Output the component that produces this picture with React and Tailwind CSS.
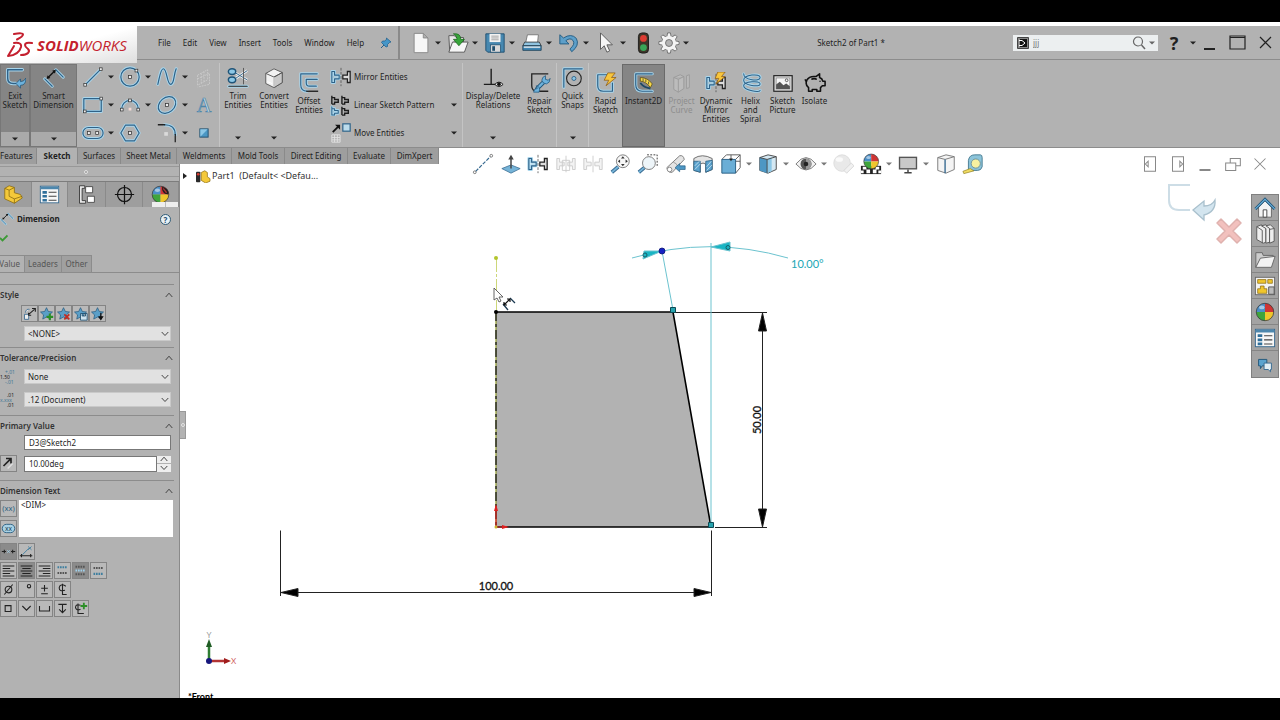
import { useState } from "react";
import clsx from "clsx";

// Line with the pale halo used by the sketch tool icons
function Glow({ d, c = "#2f6288", w = 1.3, halo = "#a9d6ec" }) {
  return (
    <g fill="none" strokeLinecap="round" strokeLinejoin="round">
      <path d={d} stroke={halo} strokeWidth={w + 2} />
      <path d={d} stroke={c} strokeWidth={w} />
    </g>
  );
}

function Dot({ x, y }) {
  return <rect x={x - 1.5} y={y - 1.5} width="3" height="3" fill="#eee" stroke="#333" strokeWidth=".8" />;
}

const STAR = "M9 2l2.200 4.600 5 .6-3.700 3.500 1 5L9 13.200l-4.500 2.500 1-5L1.800 7.200l5-.6z";

const TEETH = [0, 45, 90, 135, 180, 225, 270, 315];

const ball = (
  <g>
    <path d="M12 12V2.500a9.500 9.500 0 0 0-9.500 9.500z" fill="#4a8fc8" />
    <path d="M12 12V2.500a9.500 9.500 0 0 1 9.500 9.500z" fill="#cf3434" />
    <path d="M12 12H2.500a9.500 9.500 0 0 0 9.500 9.500z" fill="#3fa53c" />
    <path d="M12 12h9.500a9.500 9.500 0 0 1-9.500 9.500z" fill="#f0c62c" />
    <circle cx="12" cy="12" r="9.500" fill="none" stroke="#333" strokeWidth=".8" />
    <ellipse cx="8.500" cy="7" rx="3" ry="2" fill="#fff" opacity=".5" />
  </g>
);

const mirror = (
  <g>
    <Glow d="M2 6v12h3v-4h5v-4H5V6z" w={1.2} />
    <path d="M22 6v12h-3v-4h-5v-4h5V6z" fill="#ddd" stroke="#222" strokeWidth="1.400" />
    <path d="M12 2v20" stroke="#555" strokeWidth=".9" strokeDasharray="3 1.500" />
  </g>
);

const ICONS = {
  exitSketch: (
    <g>
      <Glow d="M20 3H4v9q0 6 6 6h3" w={1.6} />
      <path d="M13 18l5-5v3q4 0 6-4 0 8-6 8v3z" fill="#6db2dc" stroke="#1f5478" strokeWidth=".8" />
    </g>
  ),
  smartDim: (
    <g>
      <Glow d="M14 3l8 8M2 13l8 8" />
      <path d="M5 12l8-8" stroke="#111" strokeWidth="1.500" />
      <path d="M4 13l1-4 3 3zM14 3l-1 4-3-3z" fill="#111" />
    </g>
  ),
  line: (
    <g>
      <Glow d="M4 20L20 4" />
      <Dot x={3.5} y={20.5} />
      <Dot x={20.5} y={3.5} />
    </g>
  ),
  circle: (
    <g>
      <Glow d="M22 12a10 10 0 1 1-20 0a10 10 0 1 1 20 0" />
      <Dot x={12} y={12} />
      <Dot x={19} y={5} />
    </g>
  ),
  spline: <Glow d="M2 20C4 12 5 3 8 3c4 0 4 17 8 17 4 0 3-10 6-17" />,
  plane: (
    <g stroke="#cacaca" fill="none" strokeDasharray="2 1">
      <path d="M5 10l11-6v11L5 21zM9 8v11M12 6v11M5 14l13-6v12l-13 3" />
    </g>
  ),
  rect: (
    <g>
      <Glow d="M2 5h19v14H2z" />
      <Dot x={3} y={19} />
      <Dot x={21} y={5} />
    </g>
  ),
  arc: (
    <g>
      <Glow d="M3 16a9 9 0 0 1 18 0" />
      <Dot x={3} y={17} />
      <Dot x={21} y={17} />
      <Dot x={12} y={7} />
      <rect x="10.500" y="15" width="3" height="3" fill="#f4d9d4" />
    </g>
  ),
  ellipse: (
    <g>
      <g transform="rotate(-40 12 12)">
        <Glow d="M22.500 12a10.500 8 0 1 1-21 0a10.500 8 0 1 1 21 0" />
      </g>
      <Dot x={12} y={12} />
    </g>
  ),
  letter: (
    <text x="12" y="20" textAnchor="middle" fontFamily="Liberation Serif, serif" fontSize="22" fill="#c9dfeb" stroke="#4f86a8" strokeWidth=".8">
      A
    </text>
  ),
  slot: (
    <g>
      <Glow d="M7 6h10a6 6 0 0 1 0 12H7A6 6 0 0 1 7 6z" />
      <Dot x={7.5} y={12} />
      <Dot x={16.5} y={12} />
    </g>
  ),
  polygon: (
    <g>
      <Glow d="M7 3.500h10l5 8.500-5 8.500H7L2 12z" />
      <Dot x={12} y={12} />
    </g>
  ),
  fillet: (
    <g>
      <Glow d="M9 3q12 0 12 11" />
      <path d="M2 3h8M21 13v9" stroke="#222" strokeWidth="1.400" />
      <rect x="9" y="11" width="4" height="4" fill="#dadada" />
    </g>
  ),
  point: (
    <g>
      <rect x="7.500" y="7.500" width="9" height="9" fill="#4b97c4" stroke="#1f4e6e" />
      <path d="M8 8h8L8 16z" fill="#8cc7e6" />
    </g>
  ),
  trim: (
    <g>
      <path d="M8.500 13L22 4M8.500 6L22 14" stroke="#eee" strokeWidth="2.800" />
      <path d="M8.500 13L22 4M8.500 6L22 14" stroke="#2f6288" strokeWidth="1" />
      <ellipse cx="5.500" cy="5" rx="4" ry="3.200" fill="#8cc7e6" stroke="#1f5478" strokeWidth="1.600" />
      <ellipse cx="5.500" cy="14" rx="4" ry="3.200" fill="#8cc7e6" stroke="#1f5478" strokeWidth="1.600" />
      <path d="M18 1v18" stroke="#555" />
      <Glow d="M2 21h20" c="#222" />
    </g>
  ),
  convert: (
    <g strokeLinejoin="round">
      <path d="M3 7l9-5 9 4v11l-9 5.500L3 18z" fill="#f1f1f1" stroke="#555" />
      <path d="M12 11l9-5v11l-9 5.500z" fill="#c9c9c9" stroke="#555" />
      <path d="M3 7l9 4 9-5" fill="none" stroke="#555" />
      <path d="M12 11v11M5 16l5 2" stroke="#fff" />
    </g>
  ),
  offset: (
    <g>
      <Glow d="M21 2H3v12q0 7 7 7" w={1.2} />
      <path d="M9 21h13" stroke="#222" strokeWidth="1.500" />
      <Glow d="M21 8H9v4q0 3.500 3.500 3.500H20" />
    </g>
  ),
  mirror,
  pattern: (
    <g fill="none" strokeWidth="1.500" transform="translate(-1 0)">
      <path d="M3 2v9M3 4h3v2h4v3H6v2H3M14 2v9M14 4h3v2h4v3h-4v2h-3" stroke="#1c1c1c" />
      <path d="M14 14v9M14 16h3v2h4v3h-4v2h-3" stroke="#1c1c1c" />
      <Glow d="M3 14v9M3 16h3v2h4v3H6v2H3" w={1.1} />
    </g>
  ),
  move: (
    <g>
      <rect x="14" y="2" width="8" height="8" fill="#bcdcec" stroke="#2f6288" strokeWidth="1.300" />
      <path d="M3 11l7-7" stroke="#111" strokeWidth="2" />
      <path d="M5.500 3H11v5.500z" fill="#111" />
      <path d="M2 14h9v8H2zM5 14v8M8 14v8M2 17h9M2 19.500h9" stroke="#e2e2e2" fill="none" />
    </g>
  ),
  relations: (
    <g>
      <path d="M10 2v17M2 19h14" stroke="#1c1c1c" strokeWidth="1.500" />
      <path d="M14 19q4.500-5 9 0-4.500 4.500-9 0z" fill="#eee" stroke="#111" />
      <circle cx="18.500" cy="18.700" r="2" fill="#111" />
    </g>
  ),
  repair: (
    <g>
      <path d="M21 2H3v13q0 6 6 6h12" fill="none" stroke="#222" strokeWidth="1.400" />
      <path d="M9 18l8-8" stroke="#1f5478" strokeWidth="4.500" strokeLinecap="round" />
      <path d="M9 18l8-8" stroke="#6db2dc" strokeWidth="2.600" strokeLinecap="round" />
      <path d="M15 6l3-2v4l3 1 2-2q0 5-4 6-4 0-5-4zM11 22q2-6-3-7l1 3-3 1-1 3z" fill="#6db2dc" stroke="#1f5478" strokeWidth=".8" />
    </g>
  ),
  snaps: (
    <g>
      <Glow d="M2 22V2h20" />
      <circle cx="13" cy="12.500" r="8" fill="none" stroke="#222" strokeWidth="1.200" />
      <circle cx="13" cy="12.500" r="2.200" fill="#8cc7e6" stroke="#2f6288" />
    </g>
  ),
  rapid: (
    <g>
      <Glow d="M15 3H3v12q0 6 6 6h10V12" />
      <path d="M14 1h8l-4 5h5L12 15l3-6h-5z" fill="#f8c63d" stroke="#8f5a10" strokeWidth=".8" />
    </g>
  ),
  instant: (
    <g>
      <Glow d="M21 2H3v12q0 7 7 7h11" />
      <path d="M8 6q8 0 13 7l-2 4Q14 10 8 10z" fill="#f6d94a" stroke="#5c4a10" strokeWidth=".8" />
      <path d="M11 7v3M14 8v3M17 10.500v3" stroke="#333" strokeWidth=".8" />
      <path d="M8 12q4 5 11 6" fill="none" stroke="#1c4766" strokeWidth="2" />
    </g>
  ),
  project: (
    <g fill="#bcbcbc" stroke="#999">
      <path d="M3 6l7-3 4 2v13l-6 4-5-3zM8 8v14M3 6l5 2 6-3M17 4l3-1v14l-3 1z" />
    </g>
  ),
  dynamic: (
    <g>
      {mirror}
      <path d="M14 0h8l-4 5h4l-10 8 3-6h-4z" fill="#f8c63d" stroke="#8f5a10" strokeWidth=".8" />
    </g>
  ),
  helix: (
    <g>
      <Glow d="M4 2c0 7 18 9 18 4S4 3 4 9s18 8 18 4-18-3-18 2 18 8 18 5" w={1.1} />
    </g>
  ),
  picture: (
    <g>
      <rect x="2" y="4" width="20" height="17" fill="#ddd" stroke="#222" strokeWidth="1.300" />
      <rect x="4.500" y="6.500" width="15" height="12" fill="#f6f6f6" stroke="#777" strokeWidth=".7" />
      <path d="M4.500 18.500v-5l4-3 4 4 3-2 4 3v3z" fill="#555" />
      <circle cx="16" cy="9" r="1.500" fill="none" stroke="#333" strokeWidth=".8" />
    </g>
  ),
  pig: (
    <g fill="none" stroke="#111" strokeWidth="1.700" strokeLinejoin="round">
      <path d="M3 9Q6 4 13 5l4-3v4q3 1 3.500 4H23v5h-3l-2 2v4h-4v-2H9v2H5v-4q-4-3-2-8z" />
      <path d="M8 8q3-1.500 6 0M1 8l2 3M17.500 9.500v1" />
    </g>
  ),

  // title bar
  newDoc: <path d="M4.500 1.500h10l5 5v16h-15zM14.500 1.500v5h5" fill="#f7f7f7" stroke="#888" />,
  open: (
    <g>
      <path d="M2 4h6l2 2h8v5H7L3 22z" fill="#e9e9e9" stroke="#555" />
      <path d="M6 11h17l-4 11H2z" fill="#f6f6f6" stroke="#555" />
      <path d="M7 2q8-1 8 6h4l-6 7-6-7h4q0-4-4-6z" fill="#37a53a" stroke="#17641a" strokeWidth=".8" />
    </g>
  ),
  save: (
    <g>
      <path d="M2 2h20v20H4l-2-2z" fill="#4788b0" stroke="#1f4e6e" />
      <rect x="6" y="2" width="12" height="9" fill="#f2f2f2" />
      <path d="M8 4.500h8M8 6.500h8M8 8.500h8" stroke="#888" strokeWidth=".8" />
      <rect x="7" y="14" width="11" height="8" fill="#d9d9d9" stroke="#1f4e6e" strokeWidth=".8" />
      <rect x="9" y="15.500" width="3" height="5" fill="#1f4e6e" />
    </g>
  ),
  print: (
    <g strokeLinejoin="round">
      <path d="M7 3h12l-1 9H5z" fill="#fff" stroke="#777" />
      <path d="M4 11h16l2 4H2z" fill="#8fc3e0" stroke="#333" strokeWidth=".9" />
      <path d="M2 15h20v5H2z" fill="#3f86b3" stroke="#1d3f55" strokeWidth=".9" />
      <path d="M3 16.500h18" stroke="#f2f2f2" strokeWidth="1.400" />
    </g>
  ),
  undo: (
    <path d="M2 3v10h10L8.500 9.500q5-4 8 0 2.500 4-3.500 9l2 3q9-7 5-14.500Q14.500 1 6 6.500z" fill="#5d9fc9" stroke="#215a80" />
  ),
  cursor: <path d="M6 1v18l4-4 3 7 3-1.500-3-6.500h6z" fill="#f6f6f6" stroke="#555" />,
  traffic: (
    <g>
      <rect x="7" y="1" width="11" height="22" rx="4" fill="#3d3528" stroke="#1b1b1b" />
      <circle cx="12.500" cy="7" r="3.700" fill="#dc3b32" />
      <circle cx="12.500" cy="17" r="3.700" fill="#39a557" />
    </g>
  ),
  gear: (
    <g fill="#f4f4f4" stroke="#666" strokeWidth=".9">
      {TEETH.map((a) => (
        <path key={a} d="M9.500 6l1-5h3l1 5z" transform={`rotate(${a} 12 12)`} />
      ))}
      <circle cx="12" cy="12" r="7.600" stroke="none" />
      <circle cx="12" cy="12" r="3.800" fill="#b2b2b2" />
    </g>
  ),
  pin: (
    <g>
      <path d="M2 22l8-8" stroke="#205f8c" strokeWidth="2" />
      <path d="M13 2l9 8-3 1-4 4v4l-3 1-9-9 2-3h4l4-3z" fill="#4596c8" stroke="#205f8c" strokeWidth="1.500" />
    </g>
  ),

  // heads-up toolbar
  centerline: (
    <g>
      <path d="M4 20L20 4" stroke="#35688f" strokeWidth="1.300" strokeDasharray="4 1.500" />
      <circle cx="3" cy="21" r="1.500" fill="#fff" stroke="#555" strokeWidth=".8" />
      <circle cx="21" cy="3" r="1.500" fill="#fff" stroke="#555" strokeWidth=".8" />
    </g>
  ),
  normal: (
    <g>
      <path d="M2 17l10-4 10 4-10 5z" fill="#76b4d8" stroke="#35688f" strokeWidth=".8" />
      <path d="M12 17V5" stroke="#444" strokeWidth="1.600" />
      <path d="M9 7l3-5 3 5z" fill="#444" />
    </g>
  ),
  mirrorOff: (
    <g fill="#f3f3f3" stroke="#ccc">
      <path d="M2 6v12h3v-4h5v-4H5V6zM22 6v12h-3v-4h-5v-4h5V6zM12 3v18" />
      <path d="M8 8h8v11H8z" fill="none" />
    </g>
  ),
  mirrorOff2: <path d="M2 6v12h3v-4h5v-4H5V6zM22 6v12h-3v-4h-5v-4h5V6zM12 3v18" fill="#f3f3f3" stroke="#ccc" />,
  zoomFit: (
    <g>
      <path d="M2 21l7-6" stroke="#35688f" strokeWidth="4" />
      <path d="M2 21l7-6" stroke="#76b4d8" strokeWidth="2" />
      <circle cx="14" cy="9" r="7" fill="#f7f7f7" stroke="#777" />
      <path d="M14 3.500l2 2.500h-4zM14 14.500l2-2.500h-4zM8.500 9L11 7v4zM19.500 9L17 7v4z" fill="#333" />
    </g>
  ),
  zoomArea: (
    <g>
      <path d="M2 21l6-5" stroke="#35688f" strokeWidth="4" />
      <path d="M2 21l6-5" stroke="#76b4d8" strokeWidth="2" />
      <circle cx="13" cy="11" r="7" fill="#eef5f9" stroke="#777" />
      <path d="M11 2h11v12" fill="none" stroke="#333" strokeDasharray="2 1.500" />
    </g>
  ),
  prevView: (
    <g>
      <path d="M2 16L16 3q4-1 5 4L8 21q-5 1-6-5z" fill="#e4e4e4" stroke="#777" />
      <path d="M9 10q4 1 5 5" fill="none" stroke="#999" />
      <circle cx="5" cy="18" r="2.500" fill="#fff" stroke="#888" />
      <path d="M11 16l5-4.500V14h6v4h-6v2.500z" fill="#4d97c4" stroke="#235a80" strokeWidth=".7" />
    </g>
  ),
  section: (
    <g>
      <path d="M2 6q9-6 20 0v12l-7 3v-9q-3-2-6 0v9l-7-2z" fill="#e4e4e4" stroke="#666" />
      <path d="M2 9h7v12l-7-2zM15 9l7-1v10l-7 3z" fill="#5ba3ce" stroke="#235a80" strokeWidth=".8" />
      <path d="M3 14l5-5M3 18l6-6M16 15l5-6M16 19l6-6" stroke="#d9ecf6" strokeWidth=".8" />
    </g>
  ),
  viewOrient: (
    <g>
      <path d="M7 2h15v14M7 2L2 7M22 2l-5 5M22 16l-5 6M12 2v6M22 9h-5" fill="none" stroke="#555" />
      <path d="M2 7h15v15H2z" fill="#6aaed6" stroke="#235a80" />
      <path d="M10 6l2 3 2-3z" fill="#222" />
    </g>
  ),
  displayStyle: (
    <g strokeLinejoin="round">
      <path d="M3 5l9-3 9 2v14l-9 4-9-3z" fill="#d4e8f3" stroke="#444" />
      <path d="M3 5l8 2v15l-8-3z" fill="#4d97c4" />
      <path d="M11 7l5-2v15l-5 2z" fill="#8cc7e6" />
      <path d="M3 5l8 2 10-3M11 7v15" fill="none" stroke="#444" />
    </g>
  ),
  eye: (
    <g>
      <path d="M1 12q11-14 22 0-11 13-22 0z" fill="#f2f2f2" stroke="#777" />
      <circle cx="12" cy="12" r="6" fill="#555" />
      <path d="M12 6a6 6 0 0 1 0 12z" fill="#999" />
      <circle cx="12" cy="12" r="2.500" fill="#222" />
    </g>
  ),
  appearOff: (
    <g opacity=".6">
      <circle cx="11" cy="11" r="9" fill="#dcdcdc" stroke="#c6c6c6" />
      <ellipse cx="8" cy="7" rx="4" ry="2.500" fill="#f8f8f8" />
      <path d="M13 19l8-8 3 3-8 8z" fill="#e8e8e8" stroke="#bbb" />
    </g>
  ),
  scene: (
    <g>
      <path d="M1 14h22v9H1z" fill="#222" />
      <path d="M3 15h4v3H3zM17 15h4v3h-4zM7 18h4v4H7zM14 18h4v4h-4zM1 19h3v3H1zM20 19h3v3h-3z" fill="#fff" />
      <g transform="translate(2 -1) scale(.85)">{ball}</g>
    </g>
  ),
  monitor: (
    <g>
      <rect x="2" y="4" width="20" height="14" fill="#555" />
      <rect x="3.500" y="5.500" width="17" height="11" fill="#c9c9c9" />
      <path d="M12 18v3M8 21.500h8" stroke="#444" strokeWidth="1.600" />
    </g>
  ),
  box: (
    <g strokeLinejoin="round">
      <path d="M3 5l9-3 9 2v14l-9 4-9-3z" fill="#f4f4f4" stroke="#777" />
      <path d="M3 5l8 2 10-3" fill="none" stroke="#777" />
      <path d="M11 7v15" stroke="#35688f" strokeWidth="1.500" />
    </g>
  ),
  tape: (
    <g>
      <path d="M7 8q1-6 7-6h6q2 0 2 3v10q-1 4-5 4H7z" fill="#8cc4da" stroke="#45798f" />
      <path d="M9 17l-8 3 1 2.500 11-3z" fill="#f1dc62" stroke="#8a7a20" strokeWidth=".7" />
      <circle cx="15" cy="11.500" r="5" fill="#f7f1a0" stroke="#6b8f9a" />
    </g>
  ),

  // task pane
  home: (
    <g>
      <path d="M5 11v11h14V11l-7-7z" fill="#f4f4f4" stroke="#666" />
      <path d="M10 14h4v8h-4z" fill="#fff" stroke="#444" />
      <path d="M1.500 13L12 2.500 22.500 13" fill="none" stroke="#1f5478" strokeWidth="3" />
      <path d="M1.500 13L12 2.500 22.500 13" fill="none" stroke="#6db2dc" strokeWidth="1.200" />
    </g>
  ),
  books: (
    <g fill="#eee" stroke="#555" strokeLinejoin="round">
      <path d="M3 4l5-2 5 4v15l-3 1-7-4z" />
      <path d="M8 3l5-1 4 4v15l-4 1V6z" />
      <path d="M13 3l5-1 4 4v14l-5 2V6z" />
      <path d="M3 4l6 4v14M17 7l5-1" fill="none" />
    </g>
  ),
  folder: (
    <g>
      <path d="M2 4h7l1 3h11v4H7L2 20z" fill="#ccc" stroke="#666" />
      <path d="M7 10l16-2-4 12H2z" fill="#f2f2f2" stroke="#666" />
    </g>
  ),
  palette: (
    <g>
      <rect x="1.500" y="2.500" width="21" height="19" fill="#f3f3f3" stroke="#666" />
      <path d="M4 5h9v4H4zM15 5h5v4h-5zM7 12h4v3h3v5H4v-5h3z" fill="#f0c62c" stroke="#8a6a10" strokeWidth=".8" />
      <path d="M16 13h6v8h-6z" fill="#bbb" stroke="#555" />
    </g>
  ),
  ball,
  appearance: (
    <g>
      {ball}
      <path d="M14 3q8 2 7 9l-4-1q-4-3-3-8z" fill="#1f1f1f" />
      <path d="M15 5l4 5" stroke="#a33" strokeWidth="1.500" />
    </g>
  ),
  props: (
    <g>
      <rect x="1.500" y="2.500" width="21" height="19" fill="#f7f7f7" stroke="#35688f" />
      <path d="M2 3h20v3H2z" fill="#4d87ad" />
      <path d="M4 8h5v3H4zM4 12.500h5v3H4zM4 17h5v3H4z" fill="#2f6f9a" />
      <path d="M11 9.500h9M11 14h9M11 18.500h9" stroke="#444" strokeWidth="1.200" />
    </g>
  ),
  chat: (
    <g>
      <path d="M5 7h9v7H9l-2 3v-3H5z" fill="#5ba3ce" stroke="#1f5478" />
      <path d="M11 11h8v7h-1v2.500L15.500 18H11z" fill="#e3eef4" stroke="#35688f" />
    </g>
  ),

  // property manager
  part: (
    <g stroke="#8a6a10" strokeWidth=".9" strokeLinejoin="round">
      <path d="M2 5l5-3 6 2v6l7 2 2 4-9 6L2 17z" fill="#f4c93a" />
      <path d="M2 5l5 2 6-3M7 7v7l6 3 9-3M13 17v5" fill="none" />
    </g>
  ),
  tree: (
    <g>
      <path d="M4 2h6v3H7v14h4v3H4z" fill="#e8e8e8" stroke="#333" />
      <path d="M11 3h8v7h-8zM13 14h8v7h-8z" fill="#fff" stroke="#444" />
    </g>
  ),
  target: (
    <g fill="none" stroke="#111" strokeWidth="1.400">
      <circle cx="12" cy="12" r="8" />
      <path d="M12 1v22M1 12h22" />
    </g>
  ),
};

function Icon({ name, className = "size-6" }) {
  return (
    <svg viewBox="0 0 24 24" className={clsx("shrink-0", className)} aria-hidden="true">
      {ICONS[name]}
    </svg>
  );
}

function Caret({ className = "fill-[#222]" }) {
  return (
    <svg viewBox="0 0 6 4" className={clsx("h-1 w-[6px] shrink-0", className)} aria-hidden="true">
      <path d="M0 .5h6L3 3.500z" />
    </svg>
  );
}

function Chevron({ up, className }) {
  return (
    <svg viewBox="0 0 8 6" className={clsx("h-[6px] w-2 shrink-0", className)} aria-hidden="true">
      <path d={up ? "M.7 5L4 1.200 7.300 5" : "M.7 1L4 4.500 7.300 1"} fill="none" stroke="#444" strokeWidth="1" />
    </svg>
  );
}

const MENUS = ["File", "Edit", "View", "Insert", "Tools", "Window", "Help"];
const QUICK = [
  ["newDoc", "New"],
  ["open", "Open"],
  ["save", "Save"],
  ["print", "Print"],
  ["undo", "Undo"],
  ["cursor", "Select"],
];

function TitleBar() {
  return (
    <header className="flex h-[34px] items-center border-b border-[#8c8c8c] bg-[#b2b2b2]">
      <div className="z-10 flex h-[37px] w-[137px] shrink-0 items-center self-start bg-gradient-to-br from-white via-white to-[#dedede] pl-[6px]">
        <svg viewBox="0 0 28 26" className="h-[26px] w-7" aria-hidden="true">
          <g fill="none" stroke="#c41f2e" strokeWidth="2" strokeLinecap="round" strokeLinejoin="round">
            <path d="M8 2q9-1.500 9 .5 0 2-6 5" />
            <path d="M8 11q8-1 7 4-2 8-13 9l6-10" />
            <path d="M26 11q-7-1-7 2 0 2 3 4 2 2 0 4-2 2-7 2" />
          </g>
        </svg>
        <span className="pl-[3px] font-['Open_Sans',sans-serif] text-[15px] leading-4 text-[#c41f2e] italic">
          <b>SOLID</b>WORKS
        </span>
      </div>
      <nav className="flex gap-3 pl-[21px]">
        {MENUS.map((m) => (
          <button key={m} type="button">{m}</button>
        ))}
      </nav>
      <button type="button" aria-label="Pin menu" className="ml-4">
        <Icon name="pin" className="size-3" />
      </button>
      <div className="ml-[6px] h-full w-[2px] bg-[#8a8a8a]" />
      <div className="flex items-center pl-2">
        {QUICK.map(([icon, label]) => (
          <div key={icon} className="flex w-[37px] items-center">
            <button type="button" aria-label={label} className="flex w-[26px] justify-center">
              <Icon name={icon} className="size-[22px]" />
            </button>
            <button type="button" aria-label={`${label} options`} className="pl-px"><Caret /></button>
          </div>
        ))}
        <button type="button" aria-label="Rebuild" className="flex w-[26px] justify-center"><Icon name="traffic" className="size-[22px]" /></button>
        <button type="button" aria-label="Options" className="flex w-[26px] justify-center"><Icon name="gear" className="size-[22px]" /></button>
        <button type="button" aria-label="More options" className="pl-px"><Caret /></button>
      </div>
      <h1 className="flex-1 text-center">Sketch2 of Part1 *</h1>
      <label className="flex h-4 w-[145px] items-center bg-[#eceff0] pl-1">
        <svg viewBox="0 0 12 12" className="size-3 shrink-0" aria-hidden="true">
          <path d="M.5.5h11v11H.5z" fill="#888" stroke="#444" />
          <path d="M3 2h7v8H3z" fill="#111" />
          <path d="M2 3.500h3L8 6 5 8.500H2" fill="none" stroke="#fff" />
        </svg>
        <input aria-label="Search" defaultValue="jjj" className="w-full min-w-0 bg-transparent px-1 text-[#777] outline-none" />
        <svg viewBox="0 0 14 14" className="size-[14px] shrink-0" aria-hidden="true">
          <circle cx="6" cy="5.500" r="4.500" fill="none" stroke="#666" strokeWidth="1.200" />
          <path d="M9.500 9l3.500 4" stroke="#666" strokeWidth="1.500" />
        </svg>
        <span className="px-[3px]"><Caret className="fill-[#666]" /></span>
      </label>
      <button type="button" aria-label="Help" className="w-8 text-center text-[18px] leading-5 font-bold">?</button>
      <Caret />
      <div className="flex w-[84px] items-center">
        {[
          ["Minimize", "M6 18h11"],
          ["Maximize", "M4 5h15v13H4zM4 6.500h15"],
          ["Close", "M6 6l11 11M17 6L6 17"],
        ].map(([label, d], i) => (
          <button key={label} type="button" aria-label={label} className="flex w-7 justify-center">
            <svg viewBox="0 0 24 24" className="size-6"><path d={d} fill="none" stroke="#222" strokeWidth={i ? 1.2 : 2} /></svg>
          </button>
        ))}
      </div>
    </header>
  );
}

const GRID = [
  ["line", true], ["circle", true], ["spline", true], ["plane"],
  ["rect", true], ["arc", true], ["ellipse", true], ["letter"],
  ["slot", true], ["polygon"], ["fillet", true], ["point"],
];

function RibbonButton({ icon, label, w, low, arrow, pressed, disabled }) {
  return (
    <button
      type="button"
      disabled={disabled}
      className={clsx(
        "flex h-[83px] shrink-0 flex-col items-center text-center",
        w,
        low ? "pt-2" : "pt-[3px]",
        pressed && "bg-[#858585] outline-1 -outline-offset-1 outline-[#6a6a6a]",
        disabled && "text-[#8d8d8d]",
      )}
    >
      <Icon name={icon} className="size-[22px]" />
      <span className="pt-[2px] leading-[9px] whitespace-pre-line">{label}</span>
      {arrow && <span className="mt-auto pb-[7px]"><Caret /></span>}
    </button>
  );
}

function StickyTool({ icon, label, w }) {
  return (
    <button type="button" className={clsx("flex h-[83px] shrink-0 flex-col border border-[#777] bg-[#858585] text-center", w)}>
      <span className="flex flex-1 flex-col items-center pt-[2px]">
        <Icon name={icon} className="size-[22px]" />
        <span className="pt-[2px] leading-[9px] whitespace-pre-line">{label}</span>
      </span>
      <span className="flex h-[14px] w-full items-center justify-center bg-[#aaaaaa]"><Caret /></span>
    </button>
  );
}

function Rule() {
  return <div className="w-px shrink-0 self-stretch bg-[#c4c4c4]" />;
}

function Ribbon() {
  return (
    <div className="flex h-[88px] items-center overflow-hidden border-b border-[#8c8c8c] bg-[#b2b2b2] pt-[3px]">
      <StickyTool icon="exitSketch" label={"Exit\nSketch"} w="w-[30px]" />
      <StickyTool icon="smartDim" label={"Smart\nDimension"} w="w-[47px]" />
      <div className="grid h-[83px] shrink-0 grid-cols-[37px_37px_37px_28px] content-between pl-[3px]">
        {GRID.map(([icon, arrow]) => (
          <div key={icon} className="flex h-[27px] items-center">
            <button type="button" aria-label={icon} className="flex w-[26px] justify-center"><Icon name={icon} className="size-[22px]" /></button>
            {arrow && <span className="pl-[2px]"><Caret /></span>}
          </div>
        ))}
      </div>
      <Rule />
      <RibbonButton icon="trim" label={"Trim\nEntities"} w="w-9" arrow />
      <RibbonButton icon="convert" label={"Convert\nEntities"} w="w-9" arrow />
      <RibbonButton icon="offset" label={"Offset\nEntities"} w="w-[34px]" low />
      <div className="flex h-[83px] w-[136px] shrink-0 flex-col justify-between">
        {[
          ["mirror", "Mirror Entities", false],
          ["pattern", "Linear Sketch Pattern", true],
          ["move", "Move Entities", true],
        ].map(([icon, label, arrow]) => (
          <button key={icon} type="button" className="flex h-[27px] items-center gap-[2px] pr-[5px] pl-1 text-left">
            <Icon name={icon} className="size-[22px]" />
            <span className="flex-1 whitespace-nowrap">{label}</span>
            {arrow && <Caret />}
          </button>
        ))}
      </div>
      <Rule />
      <RibbonButton icon="relations" label={"Display/Delete\nRelations"} w="w-[60px]" arrow />
      <RibbonButton icon="repair" label={"Repair\nSketch"} w="w-[33px]" low />
      <Rule />
      <RibbonButton icon="snaps" label={"Quick\nSnaps"} w="w-[31px]" arrow />
      <Rule />
      <RibbonButton icon="rapid" label={"Rapid\nSketch"} w="w-[33px]" low />
      <RibbonButton icon="instant" label="Instant2D" w="w-[43px]" low pressed />
      <RibbonButton icon="project" label={"Project\nCurve"} w="w-[33px]" low disabled />
      <RibbonButton icon="dynamic" label={"Dynamic\nMirror\nEntities"} w="w-9" low />
      <RibbonButton icon="helix" label={"Helix\nand\nSpiral"} w="w-[33px]" low />
      <RibbonButton icon="picture" label={"Sketch\nPicture"} w="w-[31px]" low />
      <RibbonButton icon="pig" label="Isolate" w="w-[33px]" low />
    </div>
  );
}

const TABS = [
  ["Features", "w-[37px]"],
  ["Sketch", "w-[41px]"],
  ["Surfaces", "w-[43px]"],
  ["Sheet Metal", "w-[56px]"],
  ["Weldments", "w-[55px]"],
  ["Mold Tools", "w-[53px]"],
  ["Direct Editing", "w-[63px]"],
  ["Evaluate", "w-[43px]"],
  ["DimXpert", "w-[48px]"],
];

const HUD = [
  ["centerline"], ["normal"], ["mirror"], ["mirrorOff"], ["mirrorOff2"], ["zoomFit"], ["zoomArea"],
  ["prevView"], ["section"], ["viewOrient", true], ["displayStyle", true], ["eye", true], ["appearOff"],
  ["scene", true], ["monitor", true], ["box"], ["tape"],
];

const DOC_BUTTONS = [
  ["Collapse left", "M6 4h12v16H6zM10 9v6l-3-3z"],
  ["Collapse right", "M6 4h12v16H6zM14 9v6l3-3z"],
  ["Minimize document", "M6 19h12M6 18h12"],
  ["Restore document", "M4 11h11v8H4zM9 11V6h11v8h-5"],
  ["Close document", "M6 6l12 12M18 6L6 18"],
];

function TabRow() {
  const [tab, setTab] = useState("Sketch");
  return (
    <div className="relative z-10 flex h-4 bg-white">
      <nav className="flex h-4 shrink-0 bg-[#9e9e9e]">
        {TABS.map(([name, w]) => (
          <button
            key={name}
            type="button"
            onClick={() => setTab(name)}
            className={clsx(
              "border-r border-[#8a8a8a] text-center whitespace-nowrap",
              w,
              name === "Features" && "pr-1",
              tab === name ? "bg-[#b2b2b2] font-bold" : "bg-[#9e9e9e]",
            )}
          >
            {name}
          </button>
        ))}
      </nav>
      <div className="ml-[31px] flex h-8 w-[516px] shrink-0 items-center justify-between">
        {HUD.map(([icon, arrow]) => (
          <div key={icon} className="flex items-center">
            <button type="button" aria-label={icon} className="flex w-[26px] justify-center"><Icon name={icon} className="size-[22px]" /></button>
            {arrow && <span className="flex w-[10px] justify-center"><Caret className="fill-[#777]" /></span>}
          </div>
        ))}
      </div>
      <div className="mr-[7px] ml-auto flex h-8 w-[136px] items-center justify-between">
        {DOC_BUTTONS.map(([label, d]) => (
          <button key={label} type="button" aria-label={label} className="flex w-[26px] justify-center">
            <svg viewBox="0 0 24 24" className="size-[22px]"><path d={d} fill="none" stroke="#888" strokeWidth="1.100" /></svg>
          </button>
        ))}
      </div>
    </div>
  );
}

function Section({ title, children, className }) {
  return (
    <section className={className}>
      <div className="mr-[5px] border-t border-[#8c8c8c]" />
      <div className="flex h-[19px] items-center justify-between pr-[6px]">
        <h3 className="font-semibold text-[#333]">{title}</h3>
        <button type="button" aria-label={`Collapse ${title}`}><Chevron up /></button>
      </div>
      {children}
    </section>
  );
}

function Select({ label, value, icon }) {
  return (
    <label className="flex h-[15px] items-center pr-2">
      <span className="flex w-6 shrink-0 items-center">{icon}</span>
      <span className="relative flex flex-1">
        <select aria-label={label} className="h-[15px] w-full appearance-none border border-[#c9c9c9] bg-[#e1e1e1] px-[3px] leading-[13px] outline-none">
          <option>{value}</option>
        </select>
        <Chevron className="absolute top-[5px] right-[2px]" />
      </span>
    </label>
  );
}

function ToolButton({ label, on, children }) {
  return (
    <button
      type="button"
      aria-label={label}
      aria-pressed={!!on}
      className={clsx("size-[17px] shrink-0 border border-[#848484]", on ? "bg-[#8b8b8b]" : "bg-[#b9b9b9]")}
    >
      <svg viewBox="0 0 18 18" className="size-full">{children}</svg>
    </button>
  );
}

const stroke = { fill: "none", stroke: "#222", strokeWidth: 1.3 };

const tiny = (x, y, text, fill = "#222") => (
  <text x={x} y={y} fontSize="5" fontFamily="Noto Sans, sans-serif" fill={fill}>{text}</text>
);

const dashes = (y, fill) => <path d={`M3 ${y}h12`} stroke={fill} strokeWidth="2.500" strokeDasharray="2 1" />;

function PropertyPanel() {
  return (
    <aside className="flex w-[180px] shrink-0 flex-col overflow-hidden border-r border-[#8a8a8a] bg-[#b2b2b2]">
      <div className="mt-[2px] mb-1 flex h-[11px] shrink-0 items-center justify-center border-y border-[#989898]">
        <span className="mr-2 size-1 rounded-full border border-[#e4e4e4] bg-[#999]" />
      </div>
      <div className="flex h-[26px] shrink-0 border-t border-[#7d7d7d] bg-[#9e9e9e]">
        {[
          ["part", "w-8"], ["props", "w-9"], ["tree", "w-[38px]"], ["target", "w-[37px]"], ["appearance", "w-9"],
        ].map(([icon, w]) => (
          <button
            key={icon}
            type="button"
            aria-label={icon}
            className={clsx(
              "relative flex items-center justify-center border-r border-[#8a8a8a]",
              w,
              icon === "part" && "pr-1",
              icon === "props" && "bg-[#b2b2b2]",
            )}
          >
            <Icon name={icon} className="size-[21px]" />
            {icon === "appearance" && (
              <span className="absolute right-0 bottom-0 flex h-[5px] w-[26px] gap-px bg-[#bbb]">
                <i className="flex-1 bg-[#eee]" />
                <i className="flex-1 bg-[#eee]" />
              </span>
            )}
          </button>
        ))}
      </div>

      <div className="flex h-6 shrink-0 items-center pr-2">
        <Icon name="smartDim" className="size-[14px]" />
        <h2 className="flex-1 pl-[3px] font-bold text-[#222]">Dimension</h2>
        <button type="button" aria-label="Help" className="size-[11px] rounded-full border border-[#2f5a75] bg-[#e8f1f5] text-center leading-[9px] font-bold text-[#1f4e6e]">
          ?
        </button>
      </div>
      <button type="button" aria-label="OK" className="flex h-[14px] shrink-0 items-center">
        <svg viewBox="0 0 8 8" className="size-2"><path d="M0 4l2.500 2.500L7.500 1.500" fill="none" stroke="#3b9a35" strokeWidth="1.800" /></svg>
      </button>
      <div className="mt-[10px] mb-[11px] flex h-[18px] shrink-0 border-b border-[#8c8c8c] text-[#555]">
        <button type="button" className="flex w-6 items-center justify-end border-t border-[#8c8c8c] pr-1">Value</button>
        <button type="button" className="w-[38px] border border-b-0 border-[#8c8c8c] bg-[#a0a0a0]">Leaders</button>
        <button type="button" className="w-[30px] border border-b-0 border-l-0 border-[#8c8c8c] bg-[#a0a0a0]">Other</button>
      </div>

      <Section title="Style" className="pb-[6px]">
        <div className="mb-[3px] flex h-[19px] items-center pl-[21px]">
          <ToolButton label="Apply defaults">
            <path d="M3 16v-6h5v6zM4 8q1-5 5-4" fill="#eee" stroke="#35688f" />
            <path d="M8 10l7-6M8 8v3h3M12 3h4v4" {...stroke} />
          </ToolButton>
          {[
            ["Add style", <path key="a" d="M13 9v8M9 13h8" stroke="#2c8f27" strokeWidth="2.500" />],
            ["Delete style", <path key="d" d="M10 10l6 6M16 10l-6 6" stroke="#c32c22" strokeWidth="2" />],
            ["Save style", <path key="s" d="M9 9h8v8H9zM11 9v3h4V9" fill="#cfe3ee" stroke="#1f4e6e" />],
            ["Load style", <path key="l" d="M13 8v5M11 13l2 3 2-3z" fill="#111" stroke="#111" strokeWidth="1.500" />],
          ].map(([label, mark]) => (
            <ToolButton key={label} label={label}>
              <path d={STAR} fill="#5a9fc8" stroke="#1f5478" strokeWidth=".8" />
              {mark}
            </ToolButton>
          ))}
        </div>
        <Select label="Style" value="<NONE>" />
      </Section>

      <Section title="Tolerance/Precision" className="pb-2">
        <div className="flex flex-col gap-2 pt-[2px]">
          <Select
            label="Tolerance type"
            value="None"
            icon={<svg viewBox="0 0 16 16" className="size-4">{tiny(5, 5, "+.01", "#3f7795")}{tiny(0, 10, "1.50")}{tiny(5, 15, "-.01", "#3f7795")}</svg>}
          />
          <Select
            label="Precision"
            value=".12 (Document)"
            icon={<svg viewBox="0 0 16 16" className="size-4">{tiny(7, 5, ".01")}{tiny(0, 10, "x.xxx", "#3f7795")}{tiny(7, 15, ".01")}</svg>}
          />
        </div>
      </Section>

      <Section title="Primary Value" className="pb-2">
        <div className="pr-2 pl-6">
          <input aria-label="Dimension name" defaultValue="D3@Sketch2" className="block h-[15px] w-full border border-[#777] bg-white px-1 outline-none" />
        </div>
        <div className="flex items-center pt-[5px] pr-2">
          <ToolButton label="Reverse direction">
            <path d="M3 12L11 4M6 3h6v6" {...stroke} strokeWidth="2" />
            <path d="M8 15l6-6" stroke="#ddd" strokeWidth="2" />
          </ToolButton>
          <input aria-label="Dimension value" defaultValue="10.00deg" className="ml-[7px] h-4 w-0 flex-1 border border-[#777] bg-white px-1 outline-none" />
          <div className="flex h-4 w-[14px] flex-col gap-px">
            <button type="button" aria-label="Increase" className="flex flex-1 items-center justify-center bg-[#eee]"><Chevron up /></button>
            <button type="button" aria-label="Decrease" className="flex flex-1 items-center justify-center bg-[#eee]"><Chevron /></button>
          </div>
        </div>
      </Section>

      <Section title="Dimension Text">
        <div className="flex gap-[2px] pr-[6px]">
          <div className="flex flex-col justify-between">
            <ToolButton label="Add parentheses">
              <text x="9" y="12" textAnchor="middle" fontSize="9" fontFamily="Noto Sans, sans-serif" fill="#2a5f80">(xx)</text>
            </ToolButton>
            <ToolButton label="Inspection dimension">
              <rect x="1.500" y="4" width="15" height="10" rx="5" fill="#a9d2e6" stroke="#1f5478" />
              <text x="9" y="11.500" textAnchor="middle" fontSize="8" fontFamily="Noto Sans, sans-serif" fill="#1c3f55">xx</text>
            </ToolButton>
          </div>
          <textarea aria-label="Dimension text" defaultValue="<DIM>" className="h-[37px] flex-1 resize-none bg-white px-[2px] leading-[10px] outline-none" />
        </div>
        <div className="flex flex-col gap-[2px] pt-[6px]">
          <div className="flex gap-px">
            <ToolButton label="Center dimension" on>
              <path d="M1 9h5M12 9h5M4 7v4M14 7v4" {...stroke} />
              <path d="M7.500 7.500l3 3M10.500 7.500l-3 3" stroke="#9fd0ea" />
            </ToolButton>
            <ToolButton label="Offset text">
              <path d="M1 14h15M3 12v4M14 12v4" {...stroke} />
              <path d="M4 13l8-8M11 3l4 4M15 3l-4 4" stroke="#35789c" fill="none" />
            </ToolButton>
          </div>
          <div className="flex gap-px">
            <ToolButton label="Align left"><path d="M2 3.500h14M2 6.500h9M2 9.500h14M2 12.500h9M2 15.500h14" {...stroke} /></ToolButton>
            <ToolButton label="Align center" on><path d="M2 3.500h14M4 6.500h10M2 9.500h14M4 12.500h10M2 15.500h14" {...stroke} /></ToolButton>
            <ToolButton label="Align right"><path d="M2 3.500h14M7 6.500h9M2 9.500h14M7 12.500h9M2 15.500h14" {...stroke} /></ToolButton>
            <ToolButton label="Justify top">{dashes(5, "#3f7f9f")}{dashes(12, "#555")}</ToolButton>
            <ToolButton label="Justify middle" on>{dashes(4.5, "#555")}{dashes(9, "#9fd0ea")}{dashes(13.5, "#555")}</ToolButton>
            <ToolButton label="Justify bottom">{dashes(6, "#555")}{dashes(13, "#3f7f9f")}</ToolButton>
          </div>
          <div className="flex gap-px">
            <ToolButton label="Diameter"><circle cx="9" cy="9" r="4" {...stroke} /><path d="M4 15L14 3" {...stroke} /></ToolButton>
            <ToolButton label="Degree"><circle cx="12" cy="5" r="2" {...stroke} /></ToolButton>
            <ToolButton label="Plus minus"><path d="M5 7.500h8M9 3.500v8M5 14h8" {...stroke} /></ToolButton>
            <ToolButton label="Centerline symbol"><path d="M13 5q-7-4-8 2 0 5 7 3M9 2v13h5" {...stroke} /></ToolButton>
          </div>
          <div className="flex gap-px">
            <ToolButton label="Square"><path d="M5 5.500h7v7H5z" {...stroke} /></ToolButton>
            <ToolButton label="Countersink"><path d="M4 6l5 5 5-5" {...stroke} /></ToolButton>
            <ToolButton label="Counterbore"><path d="M3 6v6h12V6" {...stroke} /></ToolButton>
            <ToolButton label="Depth"><path d="M4 4h10M9 4v10M5 10l4 4 4-4" {...stroke} /></ToolButton>
            <ToolButton label="More symbols">
              <path d="M9 5q-6-2-6 3 1 4 6 2M6 3v12h7" {...stroke} />
              <path d="M13 2v8M9 6h8" stroke="#2c8f27" strokeWidth="2.200" />
            </ToolButton>
          </div>
        </div>
      </Section>
    </aside>
  );
}

// Sketch geometry, dimensions and triad, in model-view units
function SketchView() {
  return (
    <svg viewBox="180 164 1071 534" className="absolute top-0 left-0 h-[534px] w-[1071px] font-['Lato',sans-serif]">
      <path d="M496 312H673L711 527H496z" fill="#b2b2b2" />
      <path d="M496 312H673L711 527H496" fill="none" stroke="#000" strokeWidth="1.600" />
      <path d="M496 312V527" stroke="#8f9a2c" strokeWidth="1.200" />
      <path d="M496 312V527" stroke="#222" strokeWidth="1.400" strokeDasharray="9 3 3 3" />
      <path d="M496.500 258V312" stroke="#cdd77a" strokeDasharray="14 2 3 2" />
      <circle cx="496" cy="258" r="2" fill="#b3c52c" />
      <circle cx="496" cy="312" r="2" fill="#000" />

      {/* linear dimensions */}
      <g stroke="#222" fill="#000">
        <path d="M673 312.500H767M715 527.500H767M762.500 313V527M280.500 530.500V596M711.500 530.500V596M281 592.500H711" fill="none" />
        <path d="M762.500 313l4 18h-8zM762.500 527l4-18h-8zM281 592.500l17-4v8zM711 592.500l-17-4v8z" />
      </g>
      <g fill="#111" stroke="#111" strokeWidth=".3" className="text-[11px]">
        <text x="496" y="590" textAnchor="middle">100.00</text>
        <text x="761" y="420" textAnchor="middle" transform="rotate(-90 761 420)">50.00</text>
      </g>

      {/* angular dimension */}
      <g stroke="#6cc3cf" fill="none">
        <path d="M711 243V527M662 251L673 310M632 258A280 280 0 0 1 788 258" />
        <path d="M662 251l-18 0-1 8zM711 247l19-5v9z" fill="#19b5c4" />
        <circle cx="645" cy="255" r="2" stroke="#145f6a" />
        <circle cx="728" cy="247.500" r="2" stroke="#145f6a" />
      </g>
      <path d="M670.500 307.500h5v5h-5zM708.500 522.500h5v5h-5z" fill="#25a3ae" stroke="#0c4a55" />
      <circle cx="662" cy="251" r="3" fill="#1522c4" stroke="#0a1172" strokeWidth=".8" />
      <text x="791" y="268" fill="#1aa6b5" className="text-[11px]">10.00°</text>

      {/* sketch origin */}
      <path d="M496 527V506M496 527H507" stroke="#e02020" strokeWidth="1.200" />
      <path d="M496 504l2 7h-4zM509 527l-7-2v4z" fill="#e02020" />
      <circle cx="496" cy="527" r="1.500" fill="#c9b32c" />

      {/* pointer */}
      <path d="M494 288v12l3-2 2 4 2-1-2-4h4z" fill="#fff" stroke="#555" strokeWidth=".9" />
      <path d="M510 298l5 5M503 304l5 6" stroke="#1c3a52" strokeWidth="1.300" />
      <path d="M504 305l6-6M504 302v3h3M507 299h3v3" fill="none" stroke="#111" strokeWidth="1.200" />

      {/* triad */}
      <path d="M209 661V646" stroke="#2f7d34" strokeWidth="2.500" />
      <path d="M209 639l3 8h-6z" fill="#1f5c24" />
      <path d="M209 661h15" stroke="#b23333" strokeWidth="2.500" />
      <path d="M231 661l-7-3v6z" fill="#a01c1c" />
      <circle cx="209" cy="661" r="3" fill="#16167c" />
      <text x="209" y="638" textAnchor="middle" fill="#999" className="text-[8px]">Y</text>
      <text x="231" y="664" fill="#d06060" className="text-[8px]">X</text>
      <text x="188" y="700" fill="#000" fontWeight="700" className="text-[9px]">*Front</text>
    </svg>
  );
}

function Viewport() {
  return (
    <main className="relative flex-1 overflow-hidden bg-white">
      <SketchView />
      <div className="relative flex h-6 items-center pl-[3px] text-[9px]">
        <svg viewBox="0 0 4 6" className="h-[6px] w-1"><path d="M0 0l4 3-4 3z" fill="#222" /></svg>
        <svg viewBox="0 0 18 16" className="ml-2 h-[14px] w-4" aria-hidden="true">
          <rect x="1" y="3" width="5" height="12" rx="1" fill="#2a2a2a" />
          <circle cx="3.500" cy="6" r="1.500" fill="#dc3b32" />
          <path d="M7 4l4-2 3 2v5l3 2v3l-5 2-5-3z" fill="#f4c93a" stroke="#8a6a10" strokeWidth=".8" />
        </svg>
        <span className="pl-px whitespace-pre text-[#333]">Part1  (Default&lt; &lt;Defau...</span>
      </div>
      <button type="button" aria-label="Collapse panel" className="absolute top-[247px] left-0 flex h-7 w-[6px] items-center justify-center border border-l-0 border-[#999] bg-[#b2b2b2]">
        <span className="size-1 rounded-full border border-[#e4e4e4]" />
      </button>
      {/* confirmation corner */}
      <button type="button" aria-label="Exit sketch" className="absolute top-[19px] right-[34px]">
        <svg viewBox="0 0 50 40" className="h-10 w-[50px]">
          <path d="M23 2H2v15q0 10 10 10h11" fill="none" stroke="#cddde6" strokeWidth="2" />
          <path d="M26 27l11-9v5q8 0 11-6 1 12-11 15v5z" fill="#d3e5ef" stroke="#a9c0cd" strokeWidth="1.300" />
        </svg>
      </button>
      <button type="button" aria-label="Cancel sketch" className="absolute top-[53px] right-2">
        <svg viewBox="0 0 28 28" className="size-7" strokeLinejoin="round">
          <path d="M6 2l8 8 8-8 4 4-8 8 8 8-4 4-8-8-8 8-4-4 8-8-8-8z" fill="#f2c1be" stroke="#dfb1ae" strokeWidth="1.500" />
        </svg>
      </button>
    </main>
  );
}

const PANE = ["home", "books", "folder", "palette", "ball", "props", "chat"];

export default function App() {
  return (
    <div className="flex h-screen flex-col bg-black py-[22px] font-['Noto_Sans','Open_Sans',sans-serif] text-[8px] leading-[10px] text-[#1f1f1f]">
      <div className="h-1 shrink-0 bg-white" />
      <div className="shrink-0"><TitleBar /></div>
      <div className="shrink-0"><Ribbon /></div>
      <TabRow />
      <div className="flex min-h-0 flex-1 bg-white">
        <PropertyPanel />
        <Viewport />
        <div className="mt-[30px] mr-px flex w-7 shrink-0 flex-col self-start border border-[#808080]">
          {PANE.map((icon) => (
            <button key={icon} type="button" aria-label={icon} className="flex h-[26px] items-center justify-center border-b border-[#858585] bg-[#a3a3a3] last:border-b-0">
              <Icon name={icon} className="size-[22px]" />
            </button>
          ))}
        </div>
      </div>
    </div>
  );
}
